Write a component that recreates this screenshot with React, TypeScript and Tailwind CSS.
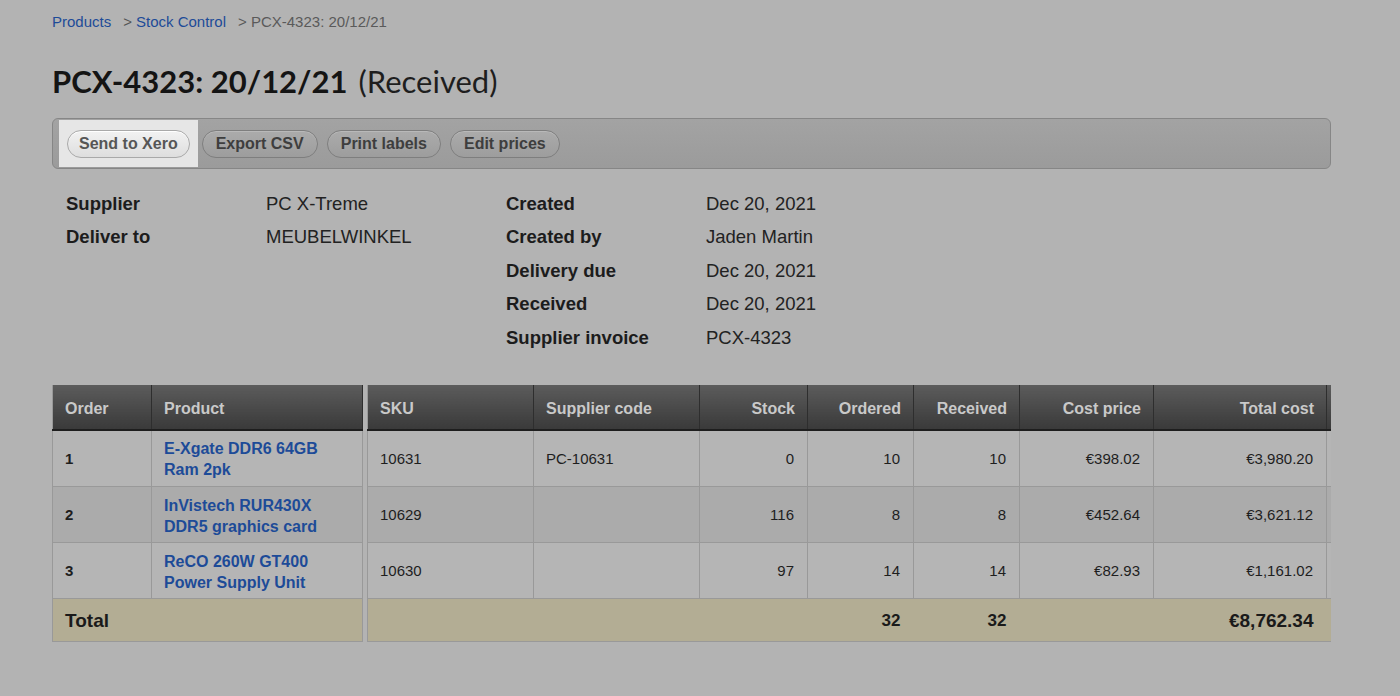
import React from "react"

const sans = { fontFamily: '"Liberation Sans", Arial, sans-serif' }

type Row = {
  order: number
  product: string[]
  sku: string
  supplierCode: string
  stock: number
  ordered: number
  received: number
  cost: string
  total: string
}

const rows: Row[] = [
  { order: 1, product: ["E-Xgate DDR6 64GB", "Ram 2pk"], sku: "10631", supplierCode: "PC-10631", stock: 0, ordered: 10, received: 10, cost: "€398.02", total: "€3,980.20" },
  { order: 2, product: ["InVistech RUR430X", "DDR5 graphics card"], sku: "10629", supplierCode: "", stock: 116, ordered: 8, received: 8, cost: "€452.64", total: "€3,621.12" },
  { order: 3, product: ["ReCO 260W GT400", "Power Supply Unit"], sku: "10630", supplierCode: "", stock: 97, ordered: 14, received: 14, cost: "€82.93", total: "€1,161.02" },
]

function ToolbarButton({ label, active }: { label: string; active?: boolean }) {
  return (
    <button
      className={
        active
          ? "h-[28px] px-[11px] rounded-full border border-[#a9a9a9] bg-gradient-to-b from-[#f2f2f2] to-[#dedede] text-[16px] font-bold text-[#565656] shadow-[inset_0_1px_0_#fff]"
          : "h-[28px] px-[13px] rounded-full border border-[#7e7e7e] bg-gradient-to-b from-[#ababab] to-[#9d9d9d] text-[16px] font-bold text-[#3e3e3e] shadow-[inset_0_1px_0_#b9b9b9]"
      }
    >
      {label}
    </button>
  )
}

function Detail({ label, value }: { label: string; value: string }) {
  return (
    <div className="flex h-[33.5px] items-center">
      <div className="w-[200px] font-bold text-[#1c1c1c]">{label}</div>
      <div className="text-[#222]">{value}</div>
    </div>
  )
}

const th = "h-[45px] px-3 pt-[4px] text-[16px] font-bold text-[#c9c9c9] border-r border-[#2e2e2e] border-b-2 border-b-[#1e1e1e] bg-gradient-to-b from-[#5c5c5c] to-[#3a3a3a]"
const td = "pl-3 pr-[13px] pt-[2px] text-[15px] text-[#1e1e1e] border-r border-b border-[#999]"
const link = "pl-3 pr-[13px] pt-[2px] text-[16px] font-bold text-[#1d4b98] leading-[21px] border-r border-b border-[#999]"
const tot = "pl-3 pr-[13px] pt-[2px] font-bold text-[#1a1a1a] text-right border-b border-[#999]"

export default function App() {
  return (
    <div className="min-h-[696px] w-[1400px] bg-[#b3b3b3]" style={sans}>
      <div className="w-[1331px] pl-[52px] pt-[12px]">
        {/* Breadcrumb */}
        <div className="flex h-[20px] items-center text-[15px]">
          <span className="text-[#1d4b98]">Products</span>
          <span className="ml-[12px] text-[#555]">&gt;</span>
          <span className="ml-[4px] text-[#1d4b98]">Stock Control</span>
          <span className="ml-[12px] text-[#5a5a5a]">&gt; PCX-4323: 20/12/21</span>
        </div>

        {/* Title */}
        <h1 className="mt-[31px] flex h-[36px] items-center text-[31px] text-[#141414]" style={{ fontFamily: 'Lato, "Liberation Sans", sans-serif' }}>
          <span className="font-bold">PCX-4323: 20/12/21</span>
          <span className="ml-[11px] font-normal text-[#1e1e1e]">(Received)</span>
        </h1>

        {/* Toolbar */}
        <div className="mt-[19px] flex h-[51px] items-stretch rounded-[6px] border border-[#868686] bg-gradient-to-b from-[#a3a3a3] to-[#9b9b9b] pl-[6px] py-[1px]">
          <div className="flex items-center bg-[#e6e6e6] px-[8px]">
            <ToolbarButton label="Send to Xero" active />
          </div>
          <div className="ml-[4px] flex items-center gap-[9px]">
            <ToolbarButton label="Export CSV" />
            <ToolbarButton label="Print labels" />
            <ToolbarButton label="Edit prices" />
          </div>
        </div>

        {/* Details */}
        <div className="mt-[18px] flex pl-[14px] text-[18.5px]">
          <div className="w-[440px]">
            <Detail label="Supplier" value="PC X-Treme" />
            <Detail label="Deliver to" value="MEUBELWINKEL" />
          </div>
          <div>
            <Detail label="Created" value="Dec 20, 2021" />
            <Detail label="Created by" value="Jaden Martin" />
            <Detail label="Delivery due" value="Dec 20, 2021" />
            <Detail label="Received" value="Dec 20, 2021" />
            <Detail label="Supplier invoice" value="PCX-4323" />
          </div>
        </div>

        {/* Table */}
        <div className="mt-[30px] flex gap-[4px]">
          <table className="w-[310px] border-collapse border-l border-[#999] table-fixed">
            <colgroup>
              <col className="w-[99px]" />
              <col className="w-[211px]" />
            </colgroup>
            <thead>
              <tr>
                <th className={th + " text-left"}>Order</th>
                <th className={th + " text-left"}>Product</th>
              </tr>
            </thead>
            <tbody>
              {rows.map((r, i) => (
                <tr key={r.order} className={i === 1 ? "bg-[#ababab]" : "bg-[#b5b5b5]"}>
                  <td className={td + (i === 0 ? " h-[57px]" : " h-[56px]") + " font-bold"}>{r.order}</td>
                  <td className={link}>
                    {r.product.map((p) => (
                      <div key={p}>{p}</div>
                    ))}
                  </td>
                </tr>
              ))}
              <tr className="bg-[#b3ad94]">
                <td colSpan={2} className="h-[43px] pl-3 pt-[2px] text-[19px] font-bold text-[#1a1a1a] border-r border-b border-[#999]">Total</td>
              </tr>
            </tbody>
          </table>

          <div className="w-[964px] overflow-hidden">
            <table className="w-[1000px] border-collapse table-fixed border-l border-[#999]">
              <colgroup>
                <col className="w-[166px]" />
                <col className="w-[166px]" />
                <col className="w-[108px]" />
                <col className="w-[106px]" />
                <col className="w-[106px]" />
                <col className="w-[134px]" />
                <col className="w-[173px]" />
                <col className="w-[41px]" />
              </colgroup>
              <thead>
                <tr>
                  <th className={th + " text-left"}>SKU</th>
                  <th className={th + " text-left"}>Supplier code</th>
                  <th className={th + " text-right"}>Stock</th>
                  <th className={th + " text-right"}>Ordered</th>
                  <th className={th + " text-right"}>Received</th>
                  <th className={th + " text-right"}>Cost price</th>
                  <th className={th + " text-right"}>Total cost</th>
                  <th className={th}></th>
                </tr>
              </thead>
              <tbody>
                {rows.map((r, i) => (
                  <tr key={r.order} className={i === 1 ? "bg-[#ababab]" : "bg-[#b5b5b5]"}>
                    <td className={td + (i === 0 ? " h-[57px]" : " h-[56px]")}>{r.sku}</td>
                    <td className={td}>{r.supplierCode}</td>
                    <td className={td + " text-right"}>{r.stock}</td>
                    <td className={td + " text-right"}>{r.ordered}</td>
                    <td className={td + " text-right"}>{r.received}</td>
                    <td className={td + " text-right"}>{r.cost}</td>
                    <td className={td + " text-right"}>{r.total}</td>
                    <td className={td}></td>
                  </tr>
                ))}
                <tr className="bg-[#b3ad94]">
                  <td colSpan={3} className="h-[43px] border-b border-[#999]"></td>
                  <td className={tot + " text-[17px]"}>32</td>
                  <td className={tot + " text-[17px]"}>32</td>
                  <td className="border-b border-[#999]"></td>
                  <td className={tot + " text-[19px]"}>€8,762.34</td>
                  <td className="border-b border-[#999]"></td>
                </tr>
              </tbody>
            </table>
          </div>
        </div>
      </div>
    </div>
  )
}
